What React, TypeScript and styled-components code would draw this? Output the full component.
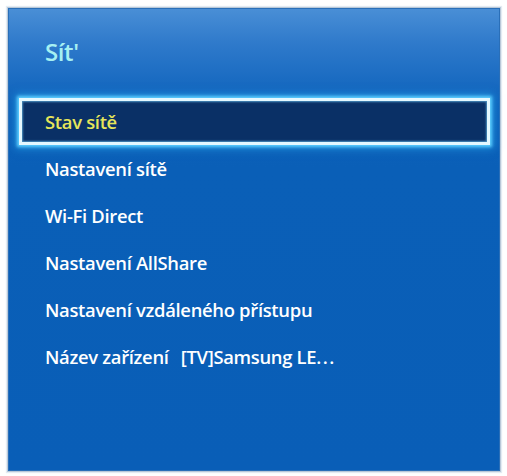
import React from 'react';
import styled, { createGlobalStyle, css } from 'styled-components';

const GlobalStyle = createGlobalStyle`
  html, body {
    margin: 0;
    padding: 0;
    background: #ffffff;
  }
  body {
    font-family: "Open Sans", "Noto Sans", "Liberation Sans", sans-serif;
  }
`;

const Page = styled.div`
  padding: 7px 6px 4px 7px;
`;

const Panel = styled.div`
  width: 494px;
  height: 465px;
  box-sizing: border-box;
  border: 1px solid #b9c8d8;
  box-shadow: 0 0 1px 1px #e3ebf3, inset 0 0 0 1px #2a6fb8;
  background: linear-gradient(
    to bottom,
    #4a8fd6 0px,
    #2f7acb 35px,
    #1b6cc2 70px,
    #0e63bb 95px,
    #0a5fb7 160px,
    #095eb7 100%
  );
  display: flex;
  flex-direction: column;
`;

const Header = styled.div`
  height: 90px;
  display: flex;
  align-items: center;
  padding-left: 37px;
  box-sizing: border-box;
`;

const Title = styled.h1`
  margin: 0;
  font-size: 24px;
  font-weight: 600;
  letter-spacing: -0.4px;
  color: #a6f0f2;
  line-height: 1;
  transform: translateY(-1px);
`;

const List = styled.ul`
  list-style: none;
  margin: 0;
  padding: 0 10px;
  display: flex;
  flex-direction: column;
`;

const Item = styled.li<{ $active?: boolean }>`
  height: 47px;
  box-sizing: border-box;
  display: flex;
  align-items: center;
  padding-left: 27px;
  font-size: 18.4px;
  font-weight: 600;
  letter-spacing: -0.3px;
  color: #ffffff;
  white-space: nowrap;

  ${({ $active }) => $active && css`
    margin-left: 1px;
    padding-left: 23px;
    color: #e6e65a;
    background: #0a3066;
    border: 3px solid #e4f8ff;
    box-shadow:
      0 0 3px 2px #5fd0ff,
      0 0 8px 4px rgba(40, 170, 240, 0.55),
      inset 0 0 2px 1px rgba(120, 210, 255, 0.6);
  `}
`;

const Gap = styled.span`
  display: inline-block;
  width: 12px;
`;

const Ellipsis = styled.span`
  letter-spacing: 1.5px;
`;

const items = [
  'Stav sítě',
  'Nastavení sítě',
  'Wi-Fi Direct',
  'Nastavení AllShare',
  'Nastavení vzdáleného přístupu',
];

export default function App() {
  return (
    <>
      <GlobalStyle />
      <Page>
        <Panel>
          <Header>
            <Title>Sít'</Title>
          </Header>
          <List>
            {items.map((label, i) => (
              <Item key={label} $active={i === 0}>
                {label}
              </Item>
            ))}
            <Item>
              Název zařízení<Gap />[TV]Samsung LE<Ellipsis>...</Ellipsis>
            </Item>
          </List>
        </Panel>
      </Page>
    </>
  );
}
